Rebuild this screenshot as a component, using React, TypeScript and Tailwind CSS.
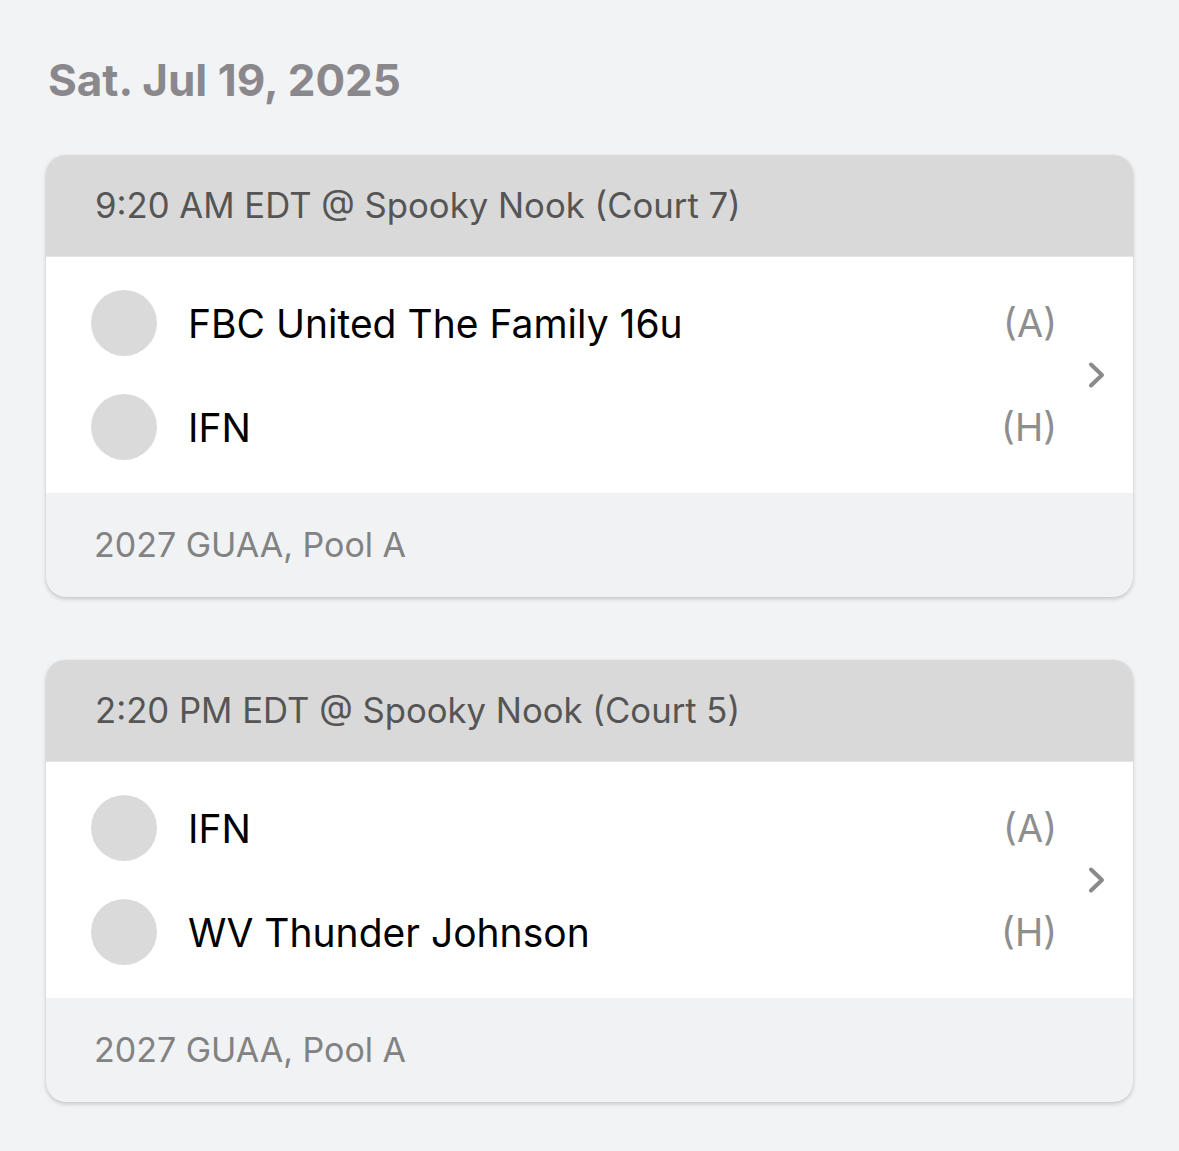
import type { FC } from 'react';

type Team = { name: string; side: string };
type Game = { time: string; teams: Team[]; pool: string };

const games: Game[] = [
  {
    time: '9:20 AM EDT @ Spooky Nook (Court 7)',
    teams: [
      { name: 'FBC United The Family 16u', side: '(A)' },
      { name: 'IFN', side: '(H)' },
    ],
    pool: '2027 GUAA, Pool A',
  },
  {
    time: '2:20 PM EDT @ Spooky Nook (Court 5)',
    teams: [
      { name: 'IFN', side: '(A)' },
      { name: 'WV Thunder Johnson', side: '(H)' },
    ],
    pool: '2027 GUAA, Pool A',
  },
];

const Chevron: FC = () => (
  <svg width="18" height="28" viewBox="0 0 18 28" fill="none" className="shrink-0">
    <path d="M4 3.5l11 10.5-11 10.5" stroke="#8a8a8a" strokeWidth="4" strokeLinecap="round" strokeLinejoin="round" />
  </svg>
);

const GameCard: FC<{ game: Game }> = ({ game }) => (
  <div className="rounded-[20px] overflow-hidden bg-[#f1f2f4] shadow-[0_2px_4px_rgba(0,0,0,0.18),0_0_1px_rgba(0,0,0,0.12)]">
    <div className="h-[102px] bg-[#d9d9d9] flex items-center pl-[49px] text-[34.7px] text-[#555555] border-b border-[#e4e4e4]">
      {game.time}
    </div>
    <div className="bg-white flex items-center pl-[45px] pr-[28px]">
      <div className="flex-1 flex flex-col gap-[38px] py-[33px]">
        {game.teams.map((t, i) => (
          <div key={i} className="h-[66px] flex items-center">
            <div className="w-[66px] h-[66px] rounded-full bg-[#dadada] shrink-0" />
            <div className="ml-[31px] flex-1 text-[39px] text-black leading-none">{t.name}</div>
            <div className="text-[38px] text-[#8e8e8e] leading-none">{t.side}</div>
          </div>
        ))}
      </div>
      <div className="ml-[30px]">
        <Chevron />
      </div>
    </div>
    <div className="h-[104px] flex items-center pl-[48px] pb-[2px] text-[34px] text-[#828282]">
      {game.pool}
    </div>
  </div>
);

const App: FC = () => (
  <div className="min-h-[1151px] bg-[#f2f3f5] px-[46px] pt-[52px] pb-[48px]" style={{ fontFamily: 'Inter, "Noto Sans", sans-serif' }}>
    <h1 className="pl-[2px] text-[44px] font-bold text-[#8a888c] leading-[56px] mb-[47px]">Sat. Jul 19, 2025</h1>
    <div className="flex flex-col gap-[63px] w-[1087px]">
      {games.map((g, i) => (
        <GameCard key={i} game={g} />
      ))}
    </div>
  </div>
);

export default App;
